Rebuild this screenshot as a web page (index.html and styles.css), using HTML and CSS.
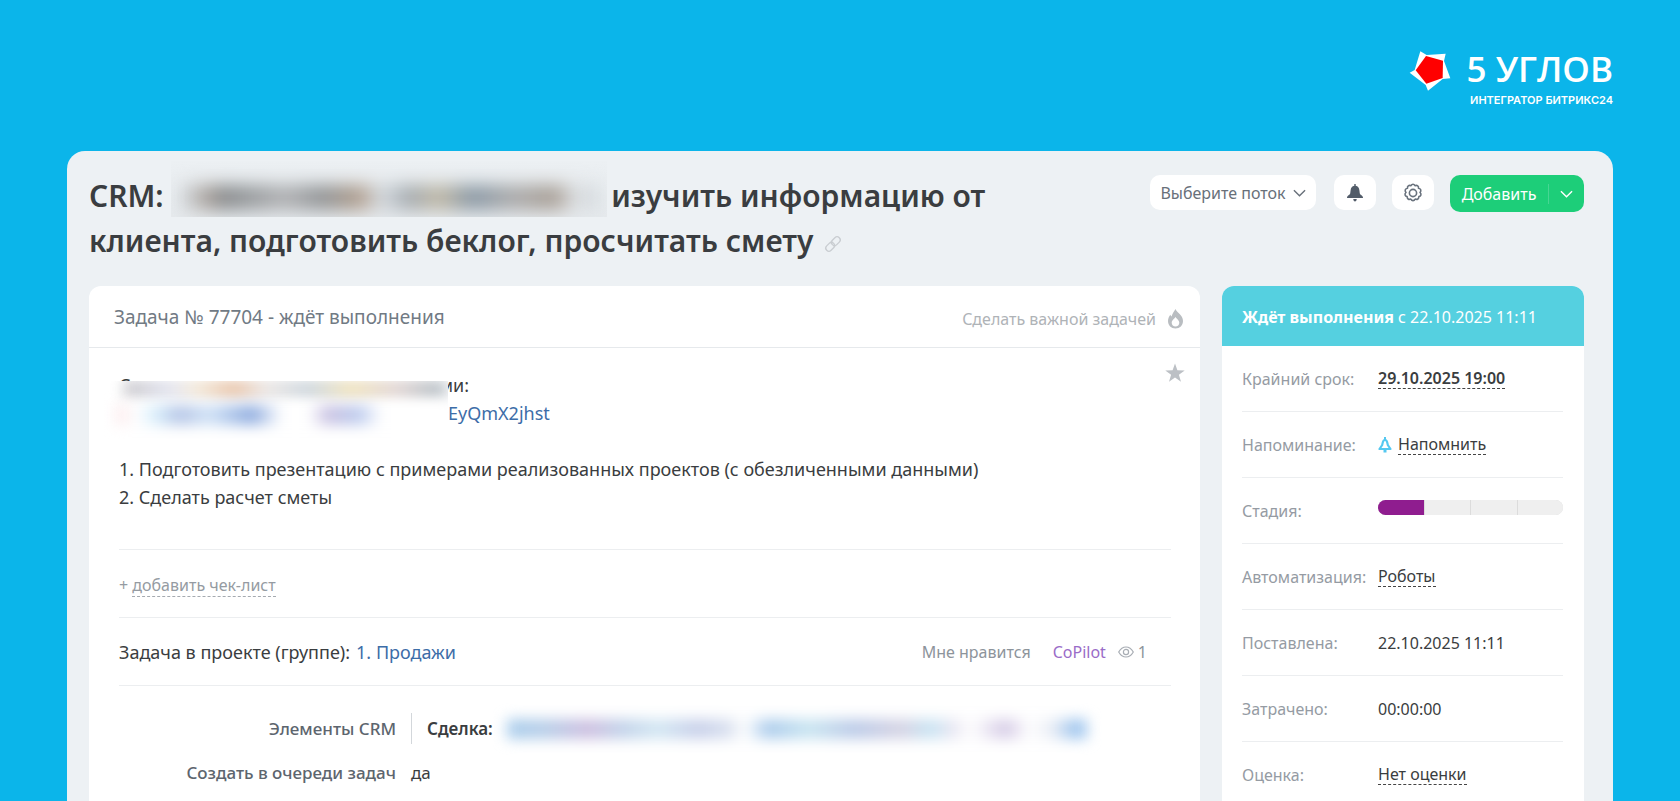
FILE: index.html
```html
<!DOCTYPE html>
<html lang="ru">
<head>
  <meta charset="UTF-8">
  <meta name="viewport" content="width=device-width, initial-scale=1">
  <title>Задача № 77704</title>
  <link rel="stylesheet" href="styles.css">
</head>
<body>

  <header class="brand">
    <svg class="brand-mark" viewBox="0 0 126 122" aria-hidden="true">
      <path fill="#fff" d="M34 2 53 13 110 9 105 31 124 83 101 85 57 120 50 103 2 66 17 58Z"/>
      <path fill="#f00" d="M51 16 102 30 101 82 52 99 20 59Z"/>
    </svg>
    <div class="brand-text">
      <div class="brand-name">5 УГЛОВ</div>
      <div class="brand-sub">ИНТЕГРАТОР БИТРИКС24</div>
    </div>
  </header>

  <main class="window">

    <div class="top">
      <h1 class="title">CRM: <span class="hidden-name"><span class="smear"></span></span> изучить информацию от<br>
        клиента, подготовить беклог, просчитать смету
        <svg class="link-icon" viewBox="0 0 18 18" aria-hidden="true">
          <g fill="none" stroke="#c9cdd1" stroke-width="1.5" transform="rotate(-45 9 9)">
            <rect x="-1" y="5.500" width="11" height="7" rx="3.500"/>
            <rect x="8" y="5.500" width="11" height="7" rx="3.500"/>
          </g>
        </svg>
      </h1>
      <div class="toolbar">
        <button class="btn btn-flow">Выберите поток
          <svg class="chevron" viewBox="0 0 14 8"><path d="M1 1l6 6 6-6"/></svg>
        </button>
        <button class="btn btn-icon" aria-label="Уведомления">
          <svg width="16" height="18" viewBox="0 0 16 18"><path fill="#525c69" d="M7.300 0h1.400v1.700c2.300.4 3.400 2 3.700 4.500l.4 3.300c.2 1.300 3.200 2.200 3.200 3.900v.6H0v-.6c0-1.700 3-2.600 3.200-3.900l.4-3.300C3.900 3.700 5 2.100 7.300 1.700zM6.300 15h3.400c0 1.500-.7 2.500-1.700 2.500s-1.700-1-1.700-2.500z"/></svg>
        </button>
        <button class="btn btn-icon" aria-label="Настройки">
          <svg width="20" height="20" viewBox="0 0 20 20" fill="none" stroke="#69727d" stroke-width="1.600">
            <path stroke-linejoin="round" d="M10 1.200q1.200 0 2 1.500 1.600-.7 2.700.1t.8 2.500q1.700.2 2.200 1.500t-.7 2.700q1.300 1.100.9 2.400t-2 1.600q.1 1.700-1 2.500t-2.700.1q-.9 1.500-2.200 1.500t-2.200-1.500q-1.600.7-2.700-.1t-1-2.500q-1.600-.3-2-1.600t.9-2.400q-1.200-1.400-.7-2.700t2.200-1.500q-.3-1.700.8-2.500T8 2.700q.8-1.500 2-1.500z"/>
            <circle cx="10" cy="10" r="3.600"/>
          </svg>
        </button>
        <div class="btn-add">
          <button class="add-main">Добавить</button>
          <button class="add-more" aria-label="Ещё">
            <svg class="chevron" viewBox="0 0 14 8"><path d="M1 1l6 6 6-6"/></svg>
          </button>
        </div>
      </div>
    </div>

    <div class="columns">

      <section class="card task">
        <div class="task-head">
          <span>Задача № 77704 - ждёт выполнения</span>
          <button class="important">Сделать важной задачей
            <svg width="17" height="20" viewBox="0 0 17 20"><path fill="#b9bdc1" fill-rule="evenodd" d="M8.500 0c1 3.500 7.500 6 7.500 12 0 4.500-3.200 7.500-7.500 7.500S1 16.500 1 12c0-2.300 1.100-4.600 2.400-6.200.2.900.6 1.400 1.200 1.700C5.200 4.500 7.200 2.500 8.500 0zM8.500 8c-.8 1.700-3.800 3-3.800 5.800 0 2.200 1.600 3.700 3.800 3.700s3.800-1.500 3.800-3.700C12.300 11 9.300 9.700 8.500 8z"/></svg>
          </button>
        </div>

        <div class="task-body">
          <button class="star" aria-label="В избранное">
            <svg width="20" height="20" viewBox="0 0 20 20"><path fill="#bcc0c5" d="M10 0.500l2.400 6.800 7.300.1-5.800 4.400 2.100 7-6-4.200-6 4.200 2.100-7L.3 7.400l7.300-.1z"/></svg>
          </button>
          <div class="description">
            <div class="secret-lines">
              <div class="secret-first"><span>С</span><span>ми:</span></div>
              <a class="secret-link" href="#">EyQmX2jhst</a>
              <div class="hidden-text"><span class="smear smear-a"></span><span class="smear smear-b"></span></div>
            </div>
            <br>
            1. Подготовить презентацию с примерами реализованных проектов (с обезличенными данными)<br>
            2. Сделать расчет сметы
          </div>

          <div class="line-row checklist">
            <span class="plus">+</span> <a href="#">добавить чек-лист</a>
          </div>

          <div class="line-row group">
            <span>Задача в проекте (группе):</span>
            <a href="#">1. Продажи</a>
            <div class="reactions">
              <a class="like" href="#">Мне нравится</a>
              <a class="copilot" href="#">CoPilot</a>
              <span class="views">
                <svg width="16" height="12" viewBox="0 0 16 12" fill="none" stroke="#a8adb4" stroke-width="1.200"><path d="M.7 6C2.500 2.800 5 1 8 1s5.500 1.800 7.300 5C13.500 9.200 11 11 8 11S2.500 9.200.7 6z"/><circle cx="8" cy="6" r="2.600"/></svg>
                1
              </span>
            </div>
          </div>

          <dl class="fields line-row">
            <dt>Элементы CRM</dt>
            <dd class="deal"><b>Сделка:</b><span class="hidden-deal"><span class="smear"></span></span></dd>
            <dt>Создать в очереди задач</dt>
            <dd>да</dd>
          </dl>
        </div>
      </section>

      <aside class="card side">
        <div class="side-head"><b>Ждёт выполнения</b> с 22.10.2025 11:11</div>
        <dl class="props">
          <div class="prop"><dt>Крайний срок:</dt><dd><a class="bold" href="#">29.10.2025 19:00</a></dd></div>
          <div class="prop"><dt>Напоминание:</dt><dd>
            <svg width="14" height="16" viewBox="0 0 14 16"><path fill="none" stroke="#55c8f0" stroke-width="2.200" stroke-linejoin="round" d="M7 3C4.500 3 4.800 6 4.200 8L1.500 12h11L9.800 8C9.200 6 9.500 3 7 3z"/><path fill="#55c8f0" d="M6 0h2v3H6zM5.500 12h3v3.500h-3z"/></svg>
            <a href="#">Напомнить</a></dd></div>
          <div class="prop"><dt>Стадия:</dt><dd><div class="stages"><i class="done"></i><i></i><i></i><i></i></div></dd></div>
          <div class="prop"><dt>Автоматизация:</dt><dd><a href="#">Роботы</a></dd></div>
          <div class="prop"><dt>Поставлена:</dt><dd>22.10.2025 11:11</dd></div>
          <div class="prop"><dt>Затрачено:</dt><dd>00:00:00</dd></div>
          <div class="prop"><dt>Оценка:</dt><dd><a href="#">Нет оценки</a></dd></div>
        </dl>
      </aside>

    </div>
  </main>

</body>
</html>
```
FILE: styles.css
```css
* {
  box-sizing: border-box;
}

body {
  margin: 0;
  height: 100vh;
  overflow: hidden;
  display: flex;
  flex-direction: column;
  background: #0bb5ea;
  color: #3a3d40;
  font-family: "Noto Sans", "Open Sans", sans-serif;
  font-size: 18px;
}

a {
  color: inherit;
  text-decoration: none;
}

button {
  font: inherit;
  color: inherit;
  border: 0;
  padding: 0;
  background: none;
  cursor: pointer;
}

dl, dd {
  margin: 0;
}

/* brand */
.brand {
  flex: none;
  display: flex;
  justify-content: flex-end;
  gap: 16px;
  padding: 48px 67px 0;
  height: 151px;
  color: #fff;
}

.brand-mark {
  width: 42px;
  height: 42px;
  margin-top: 2px;
}

.brand-text {
  text-align: right;
}

.brand-name {
  font-family: "Open Sans", sans-serif;
  font-size: 35px;
  line-height: 42px;
  font-weight: 600;
}

.brand-sub {
  font-family: Inter, sans-serif;
  font-size: 11px;
  line-height: 20px;
  font-weight: 600;
}

/* window */
.window {
  flex: 1 0 auto;
  margin: 0 67px;
  padding: 22px 29px 0 22px;
  background: #edf1f4;
  border-radius: 18px 18px 0 0;
}

.top {
  display: flex;
  justify-content: space-between;
  height: 113px;
}

.title {
  margin: 0;
  max-width: 920px;
  font-size: 30px;
  line-height: 45px;
  font-weight: 600;
}

.hidden-name {
  display: inline-block;
  width: 436px;
  height: 56px;
  margin: -12px -4px -10px 0;
  padding: 24px 10px 0;
  overflow: hidden;
  background: linear-gradient(#ecf0f3, #e6eaed);
}

.smear {
  display: block;
  filter: blur(7px);
}

.hidden-name .smear {
  height: 25px;
  filter: blur(9px);
  background: linear-gradient(90deg, #d5dbe0, #a59c95 7%, #85888a 10%, #989b9d 17%, #b0b1b3 25%, #8f9294 34%, #b09c8a 43%, #d5dbe0 48%, #a2a8ad 55%, #c0b8a4 62%, #8796a3 70%, #aaa 80%, #a79d93 90%, #e0e4e7 95%, #cdd2d6);
}

.link-icon {
  width: 16px;
  height: 16px;
  margin-left: 4px;
  overflow: visible;
}

.toolbar {
  display: flex;
  align-items: flex-start;
  padding-top: 2px;
}

.btn {
  display: flex;
  align-items: center;
  justify-content: center;
  height: 35px;
  background: #fff;
  border-radius: 10px;
}

.btn-flow {
  width: 166px;
  gap: 7px;
  margin-right: 18px;
  font-size: 16px;
  color: #68707a;
}

.btn-icon {
  width: 42px;
  margin-right: 16px;
}

.chevron {
  width: 13px;
  height: 8px;
  fill: none;
  stroke: currentColor;
  stroke-width: 1.5;
}

.btn-add {
  display: flex;
  align-items: center;
  width: 134px;
  height: 37px;
  background: #1dce79;
  border-radius: 10px;
  color: #fff;
  font-size: 16px;
}

.add-main {
  flex: 1;
}

.add-more {
  display: flex;
  align-items: center;
  justify-content: center;
  width: 36px;
  height: 20px;
  border-left: 1px solid #47d693;
}

/* columns */
.columns {
  display: flex;
  align-items: flex-start;
  gap: 22px;
}

.card {
  background: #fff;
  border-radius: 12px 12px 0 0;
}

.task {
  flex: 1;
}

.task-head {
  display: flex;
  align-items: center;
  justify-content: space-between;
  height: 62px;
  padding: 0 16px 0 25px;
  border-bottom: 1px solid #e6e9ec;
  font-size: 19px;
  color: #717a84;
}

.important {
  display: flex;
  align-items: center;
  gap: 11px;
  padding-top: 4px;
  font-size: 16px;
  color: #afb3b7;
}

.task-body {
  position: relative;
  padding: 23px 29px 0 30px;
}

.star {
  position: absolute;
  top: 15px;
  right: 15px;
}

.description {
  line-height: 28px;
  padding-bottom: 38px;
}

.secret-lines {
  position: relative;
}

.secret-first {
  display: flex;
  justify-content: space-between;
  width: 350px;
}

.secret-link {
  display: block;
  margin-left: 329px;
  color: #3d6da8;
}

/* covers the private part of the description */
.hidden-text {
  position: absolute;
  left: -15px;
  top: 10px;
  width: 344px;
  height: 72px;
  overflow: hidden;
  background: #fff;
}

.smear-a {
  height: 16px;
  margin: 0 0 8px 20px;
  background: linear-gradient(90deg, #c4c2c6, #dfe1ee 14%, #f2e8d8 22%, #e6bfa2 34%, #e9e4e2 44%, #c8d2da 57%, #eee0b8 70%, #dfd2d0 84%, #b4bcc2 96%, #c6ccd2);
}

.smear-b {
  height: 20px;
  margin-left: 12px;
  background: linear-gradient(90deg, #fbe6e8, #fff 6%, #d8eefb 12%, #b5c5e6 19%, #d0e2f6 28%, #8facdf 41%, #fff 50%, #fff 58%, #c9c2e2 64%, #bccbee 73%, #fff 80%);
}

.line-row {
  border-top: 1px solid #eceef0;
  height: 68px;
}

.checklist {
  padding-top: 24px;
  font-size: 16px;
  color: #959ba2;
}

.checklist a {
  border-bottom: 1px dashed #a5aab0;
}

.group {
  display: flex;
  align-items: center;
  gap: 6px;
}

.group > a {
  color: #3d6da8;
}

.reactions {
  display: flex;
  align-items: center;
  margin: 0 24px 0 auto;
  font-size: 16px;
  color: #8d949b;
}

.like {
  margin-right: 22px;
}

.copilot {
  margin-right: 12px;
  color: #9a6cc8;
}

.views {
  display: flex;
  align-items: center;
  gap: 4px;
}

.fields {
  display: grid;
  grid-template-columns: 277px 1fr;
  column-gap: 15px;
  row-gap: 13px;
  height: auto;
  padding: 27px 0 30px;
  font-size: 17px;
  line-height: 31px;
}

.fields dt {
  text-align: right;
  font-weight: 500;
  color: #5d656e;
}

.deal {
  display: flex;
  padding-left: 15px;
  border-left: 1px solid #d3d7db;
}

.deal b {
  font-weight: 600;
}

.hidden-deal {
  flex: 1;
  margin-left: 14px;
  max-width: 580px;
}

.hidden-deal .smear {
  height: 20px;
  margin-top: 6px;
  background: linear-gradient(90deg, #a9cdec, #b6cfe9 6%, #cdbfe0 14%, #c2d3ea 20%, #d3e7f3 26%, #c8d0ea 33%, #d8e0ef 38%, #fff 41%, #acccec 45%, #c9e5f1 52%, #bccbe8 60%, #d5d3e4 68%, #c8e4f3 73%, #eae7f3 77%, #fff 80%, #d5cbe6 86%, #fff 90%, #eaedf5 94%, #9fc6ee 98%, #a5c8ee);
}

/* side panel */
.side {
  width: 362px;
  overflow: hidden;
}

.side-head {
  height: 60px;
  padding-left: 20px;
  line-height: 62px;
  font-size: 16px;
  background: #55d0e0;
  color: #fff;
}

.props {
  padding: 0 21px 0 20px;
  font-size: 16px;
}

.prop {
  display: flex;
  align-items: center;
  height: 66px;
  border-bottom: 1px solid #eceef0;
}

.prop dt {
  width: 136px;
  color: #959ba3;
}

.prop dd {
  flex: 1;
  display: flex;
  align-items: center;
  gap: 6px;
}

.prop a {
  line-height: 20px;
  border-bottom: 1px dashed #444;
}

.bold {
  font-weight: 600;
}

.stages {
  display: flex;
  flex: 1;
  gap: 1px;
  height: 15px;
  margin-bottom: 6px;
  border-radius: 8px;
  overflow: hidden;
  background: #dcdcdc;
}

.stages i {
  flex: 1;
  background: #efefef;
}

.stages .done {
  background: #8f1d8f;
}
```
